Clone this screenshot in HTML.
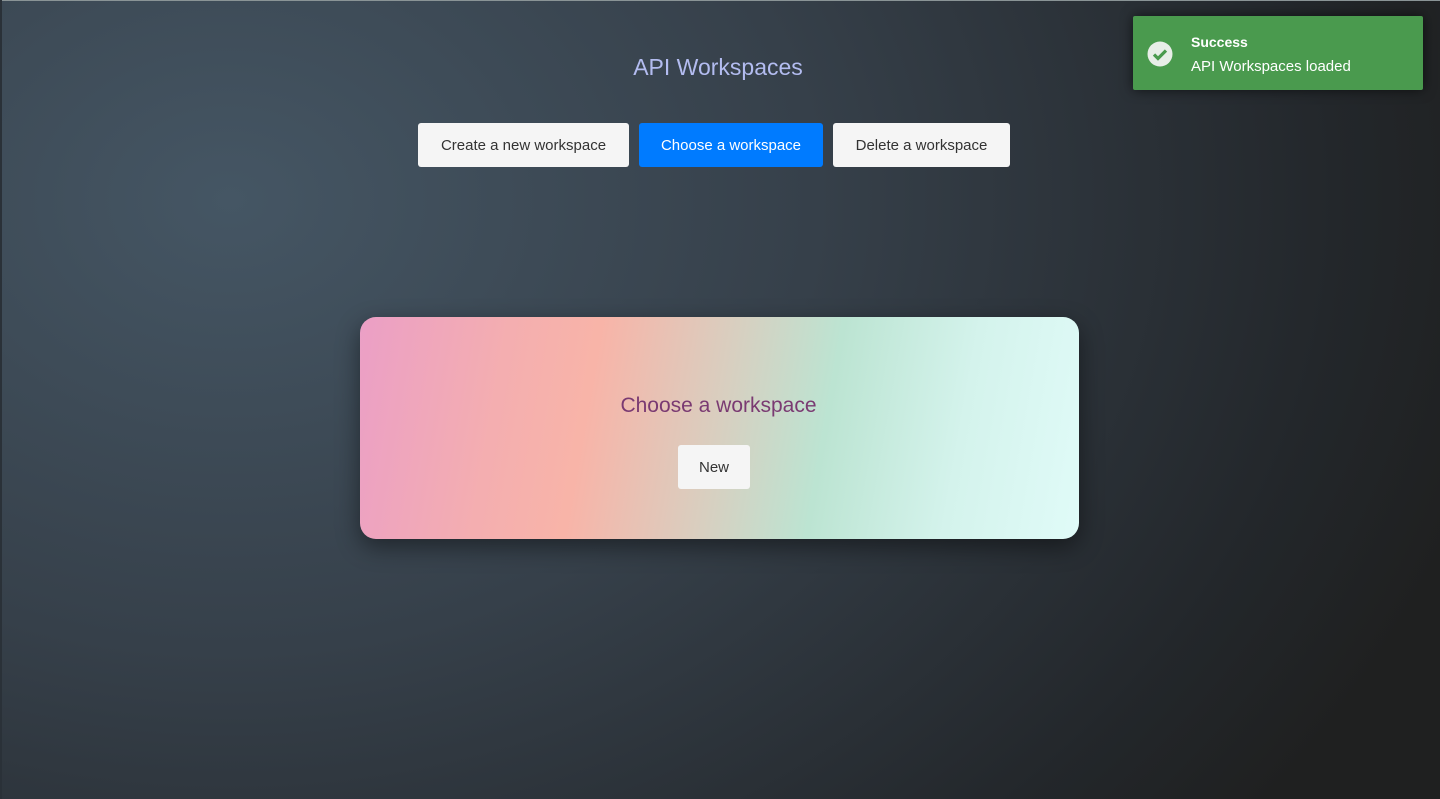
<!DOCTYPE html>
<html><head><meta charset="utf-8"><style>
*{box-sizing:border-box;margin:0;padding:0}
body{width:1440px;height:799px;overflow:hidden;font-family:"Liberation Sans",sans-serif;
background:radial-gradient(ellipse 1300px 1000px at 230px 200px,#455664 0%,#36404a 45%,#23272b 85%,#1f2020 100%);position:relative}
.tl{position:absolute;left:0;top:0;width:1440px;height:1px;background:#8a9496}
.ll{position:absolute;left:0;top:0;width:2px;height:799px;background:#2a3138}
h1{position:absolute;top:54px;left:0;width:1440px;text-align:center;font-weight:normal;font-size:23px;color:#b3bcf0;padding-left:-2px}
.btn{position:absolute;top:123px;height:44px;border-radius:3px;background:#f5f5f5;color:#333;font-size:15px;display:flex;align-items:center;justify-content:center}
.blue{background:#007bff;color:#fff}
.toast{position:absolute;left:1133px;top:16px;width:290px;height:74px;background:#4a9a4e;color:#fff;box-shadow:0 0 12px rgba(0,0,0,.6);border-radius:2px}
.card{position:absolute;left:360px;top:317px;width:719px;height:222px;border-radius:16px;
background:linear-gradient(100deg,#eb9fc6 0%,#f4aeb0 20%,#f8b4a8 32%,#d8cfc0 50%,#bce4d2 64%,#d4f3ec 82%,#e0fbf8 100%);
box-shadow:0 8px 24px rgba(0,0,0,.45)}
</style></head><body>
<div class="tl"></div><div class="ll"></div>
<h1 style="width:1436px">API Workspaces</h1>
<div class="btn" style="left:418px;width:211px">Create a new workspace</div>
<div class="btn blue" style="left:639px;width:184px">Choose a workspace</div>
<div class="btn" style="left:833px;width:177px">Delete a workspace</div>
<div class="toast">
<svg style="position:absolute;left:14px;top:25px" width="26" height="26" viewBox="0 0 26 26"><circle cx="13" cy="13" r="12.5" fill="#e8eee8"/><path d="M7 13.5l4 4 8-8" stroke="#4a9a4e" stroke-width="3.2" fill="none"/></svg>
<div style="position:absolute;left:58px;top:18px;font-weight:bold;font-size:14px">Success</div>
<div style="position:absolute;left:58px;top:42px;font-size:15px">API Workspaces loaded</div>
</div>
<div class="card">
<div style="position:absolute;top:77px;width:100%;text-align:center;font-size:21px;color:#7a3a72;padding-right:2px">Choose a workspace</div>
<div class="btn" style="left:318px;top:128px;width:72px;height:44px;">New</div>
</div>
</body></html>
